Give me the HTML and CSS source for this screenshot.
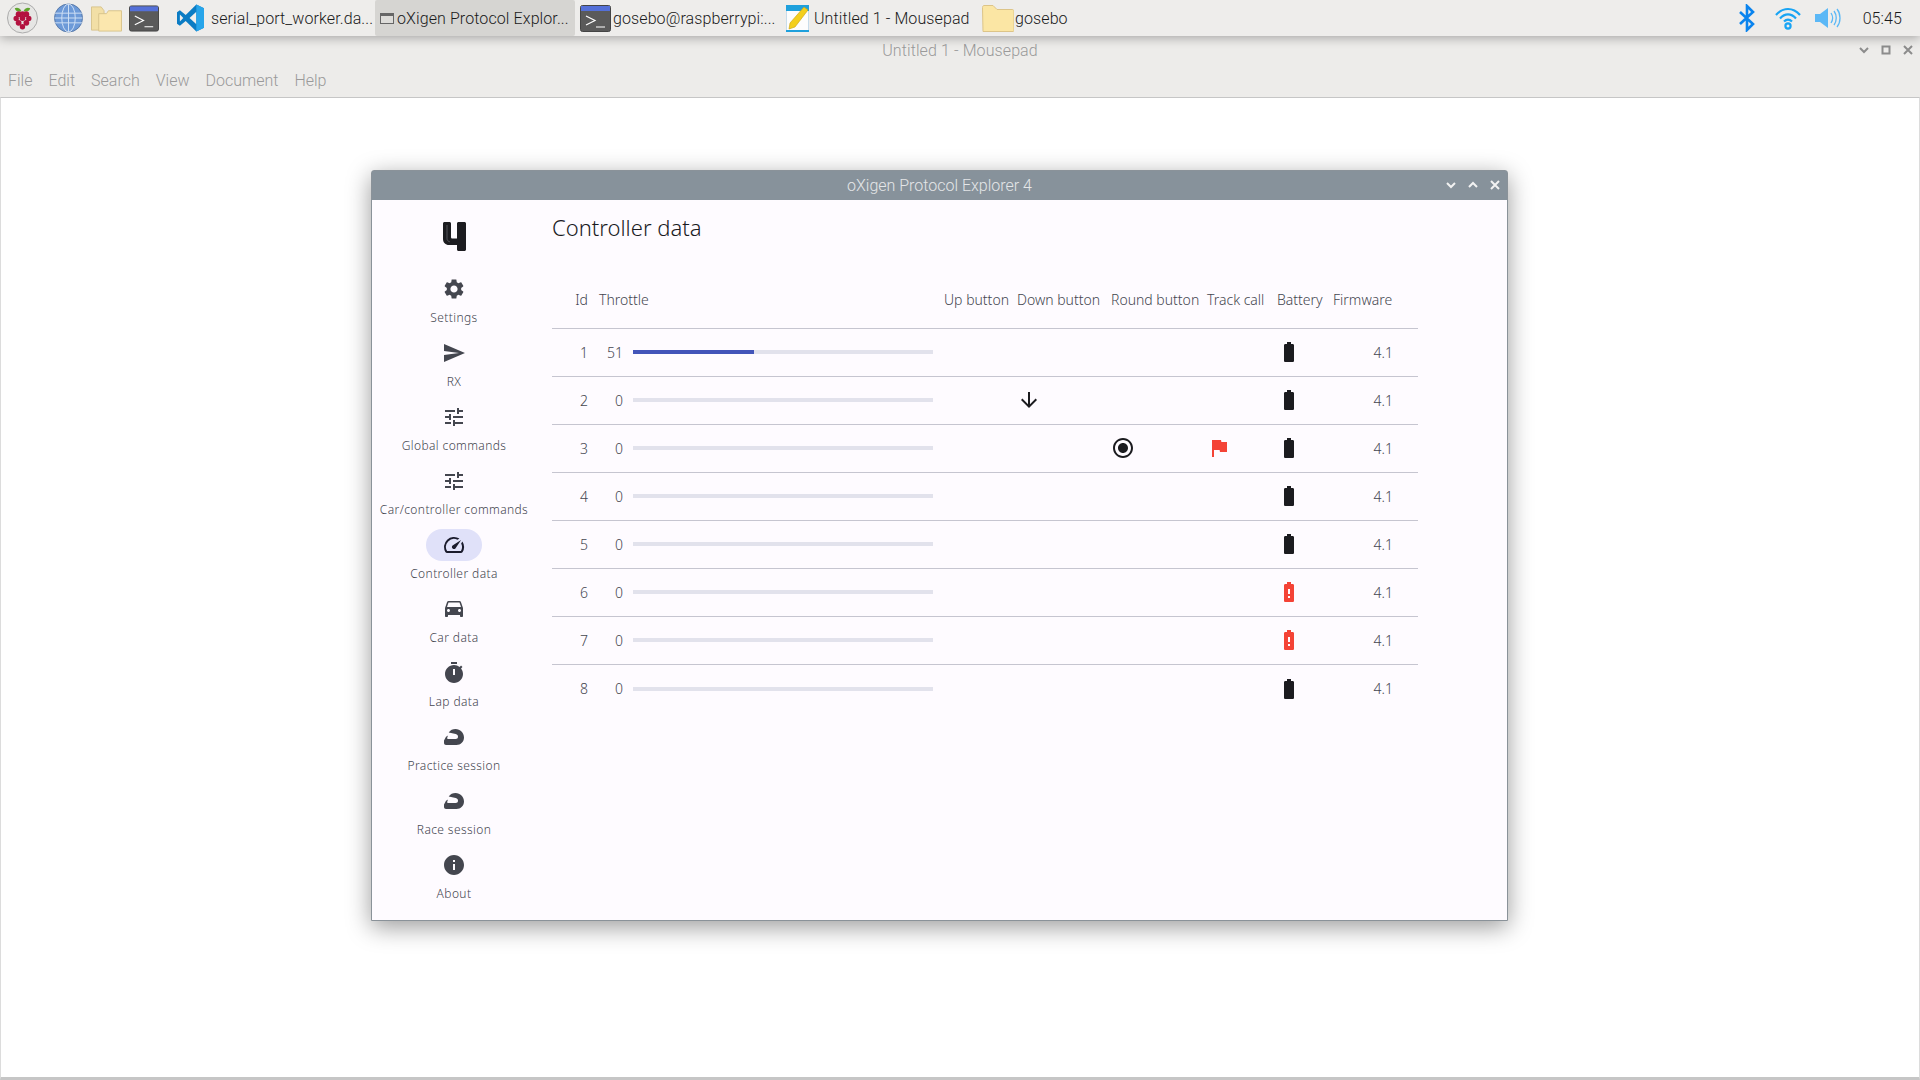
FILE: index.html
```html
<!DOCTYPE html>
<html lang="en">
<head>
  <meta charset="UTF-8" />
  <title>oXigen Protocol Explorer 4</title>
  <link rel="stylesheet" href="styles.css">
</head>
<body>
  <svg class="defs" width="0" height="0">
    <symbol id="ic-terminal" viewBox="0 0 31 27">
      <rect x="0.5" y="0.5" width="30" height="26" rx="2" fill="#5a5a5a" stroke="#444"/>
      <rect x="1" y="1" width="29" height="5" fill="#5470d8"/>
      <path d="M6 11l9 4.5-9 4.5M16 22h9" fill="none" stroke="#fff" stroke-width="1.2"/>
    </symbol>
    <symbol id="ic-folder" viewBox="0 0 32 27">
      <path d="M0.5 2.5c0-1 .6-2 1.5-2h9l4 4h15c1 0 2 .6 2 1.5v19.5c0 .5-.5 1-1 1h-30z" fill="#fbe6a4" stroke="#dcc488"/>
    </symbol>
    <symbol id="ic-tune" viewBox="0 0 24 24"><path d="M3 17v2h6v-2H3zM3 5v2h10V5H3zm10 16v-2h8v-2h-8v-2h-2v6h2zM7 9v2H3v2h4v2h2V9H7zm14 4v-2H11v2h10zm-6-4h2V7h4V5h-4V3h-2v6z"/></symbol>
    <symbol id="ic-helmet" viewBox="0 0 24 24"><path fill-rule="evenodd" d="M22 12.5C22 7.8 18.2 4 13.5 4 10.800 4 8.300 5.200 6.700 7.400l7 1.600c1.600.4 2.300 1.500 2.300 2.700 0 1.300-1 2.300-2.300 2.300H6.500c-1 0-1.500-.5-1.300-1.300l.8-2.200L4 11.800 2 15.500V18c0 1.100.9 2 2 2h10.500c4.200 0 7.500-3.300 7.500-7.500z"/></symbol>
    <symbol id="ic-battery" viewBox="0 0 24 24"><path d="M15.670 4H14V2h-4v2H8.330C7.600 4 7 4.600 7 5.330v15.330C7 21.400 7.600 22 8.330 22h7.330c.74 0 1.340-.6 1.340-1.330V5.330C17 4.600 16.400 4 15.670 4z"/></symbol>
    <symbol id="ic-battery-alert" viewBox="0 0 24 24"><path d="M15.670 4H14V2h-4v2H8.330C7.600 4 7 4.600 7 5.330v15.330C7 21.400 7.600 22 8.330 22h7.330c.74 0 1.340-.6 1.340-1.330V5.330C17 4.600 16.400 4 15.670 4zM13 18h-2v-2h2v2zm0-4h-2V9h2v5z"/></symbol>
  </svg>

  <div class="taskbar">
    <div class="launchers">
      <svg class="tb-raspi" viewBox="0 0 32 32" width="32" height="32">
        <circle cx="16" cy="16" r="15.500" fill="#e6e6e4" stroke="#a9a9a9"/>
        <path d="M15 9c-2-4-5-4-7-3 1 3 3 4 7 3zM17 9c2-4 5-4 7-3-1 3-3 4-7 3z" fill="#5fa52e"/>
        <g fill="#b3123f">
          <circle cx="12" cy="12" r="3"/><circle cx="20" cy="12" r="3"/><circle cx="16" cy="11.500" r="2.500"/>
          <circle cx="9.500" cy="16.500" r="2.800"/><circle cx="16" cy="16" r="3"/><circle cx="22.500" cy="16.500" r="2.800"/>
          <circle cx="12" cy="21" r="3"/><circle cx="20" cy="21" r="3"/><circle cx="16" cy="25" r="2.800"/>
        </g>
      </svg>
      <svg class="tb-globe" viewBox="0 0 30 30" width="30" height="30">
        <circle cx="15" cy="15" r="14.500" fill="#6d9ad8" stroke="#5a7aa8"/>
        <g fill="none" stroke="#cfe0f5" stroke-width="1">
          <ellipse cx="15" cy="15" rx="7" ry="14.500"/>
          <path d="M15 .5v29M1 10h28M1 20h28M.5 15h29"/>
        </g>
      </svg>
      <svg class="tb-folder-l" viewBox="0 0 32 27" width="32" height="27">
        <path d="M.5 1.500h10l3 4v20h-13z" fill="#f2dfa6" stroke="#d8c48c"/>
        <path d="M8 8.500h8l2-3h13.500v21H8z" fill="#fbe7ae" stroke="#d8c48c"/>
      </svg>
      <svg class="tb-term" width="31" height="27"><use href="#ic-terminal"/></svg>
      <svg class="tb-code" viewBox="0 0 28 28" width="28" height="28">
        <path d="M20 0l8 4v20l-8 4-11-11-6 5-3-2v-12l3-2 6 5z" fill="#0a7cc4"/>
        <path d="M20 7.500l-7 6.500 7 6.500z" fill="#f0efed"/>
        <path d="M3 10.500l3.500 3.500-3.500 3.500z" fill="#f0efed"/>
        <path d="M20 0l8 4v20l-8 4z" fill="#27a5ea"/>
      </svg>
    </div>
    <div class="task task-code">serial_port_worker.da...</div>
    <div class="task task-active">
      <span class="win-glyph"></span>
      <span>oXigen Protocol Explor...</span>
    </div>
    <div class="task task-term">
      <svg width="31" height="27"><use href="#ic-terminal"/></svg>
      <span>gosebo@raspberrypi:...</span>
    </div>
    <div class="task task-pad">
      <svg viewBox="0 0 23 27" width="23" height="27">
        <rect x="0.500" y="0.500" width="22" height="26" fill="#fdfdfd" stroke="#c8dcea"/>
        <rect x="0" y="0" width="23" height="6" fill="#1ea0dc"/>
        <rect x="0" y="25" width="23" height="2" fill="#1ea0dc"/>
        <path d="M18 2l4 3-13 17-6 2 1-6z" fill="#f3cf1c" stroke="#c9a10e" stroke-width=".6"/>
      </svg>
      <span>Untitled 1 - Mousepad</span>
    </div>
    <div class="task task-folder">
      <svg width="32" height="27"><use href="#ic-folder"/></svg>
      <span>gosebo</span>
    </div>
    <div class="tray">
      <svg viewBox="0 0 16 28" width="16" height="28" fill="none" stroke="#0a84ee" stroke-width="2.600">
        <path d="M1 8l13 12-6 6V2l6 6L1 20"/>
      </svg>
      <svg class="tray-wifi" viewBox="0 0 26 23" width="26" height="23" fill="none" stroke="#18a4f4" stroke-width="2.200">
        <path d="M1 8c7-8 17-8 24 0M5 11.500c5-5.500 11-5.500 16 0M9 14.500c2.500-2.500 5.500-2.500 8 0"/>
        <circle cx="13" cy="19" r="2.600"/>
      </svg>
      <svg class="tray-vol" viewBox="0 0 26 20" width="26" height="20">
        <path d="M0 6h5l8-6v20l-8-6H0z" fill="#5bb8f6"/>
        <path d="M16 5c2 3 2 7 0 10M19 3c3 4 3 10 0 14M22 1c4 5 4 13 0 18" fill="none" stroke="#5bb8f6" stroke-width="1.300"/>
      </svg>
      <span class="clock">05:45</span>
    </div>
  </div>

  <div class="pad-title">
    <span>Untitled 1 - Mousepad</span>
    <div class="pad-btns">
      <svg viewBox="0 0 10 10" width="10" height="10"><path d="M1 3l4 4 4-4" fill="none" stroke="#8c8c8c" stroke-width="2"/></svg>
      <svg viewBox="0 0 10 10" width="10" height="10"><rect x="1.500" y="1.500" width="7" height="7" fill="none" stroke="#8c8c8c" stroke-width="2"/></svg>
      <svg viewBox="0 0 10 10" width="10" height="10"><path d="M1 1l8 8M9 1l-8 8" fill="none" stroke="#8c8c8c" stroke-width="2"/></svg>
    </div>
  </div>
  <div class="pad-menu">
    <span>File</span><span>Edit</span><span>Search</span><span>View</span><span>Document</span><span>Help</span>
  </div>
  <div class="pad-editor"></div>

  <div class="window">
    <div class="win-title">
      <span>oXigen Protocol Explorer 4</span>
      <div class="win-btns">
        <svg viewBox="0 0 10 10" width="10" height="10"><path d="M1 3l4 4 4-4" fill="none" stroke="#f2f2f2" stroke-width="2"/></svg>
        <svg viewBox="0 0 10 10" width="10" height="10"><path d="M1 7l4-4 4 4" fill="none" stroke="#f2f2f2" stroke-width="2"/></svg>
        <svg viewBox="0 0 10 10" width="10" height="10"><path d="M1 1l8 8M9 1l-8 8" fill="none" stroke="#f2f2f2" stroke-width="2"/></svg>
      </div>
    </div>
    <div class="win-body">
      <nav class="rail">
        <svg class="logo" viewBox="0 0 23 29" width="23" height="29">
          <path d="M0 1.500C0 .7.700 0 1.500 0h5C7.300 0 8 .7 8 1.500V15c0 1 .5 1.500 1.500 1.500H14V1.500c0-.8.700-1.500 1.500-1.500h6c.8 0 1.500.7 1.500 1.500v26c0 .8-.7 1.500-1.500 1.500h-6c-.8 0-1.500-.7-1.500-1.500V23H6c-3.500 0-6-2.500-6-6z" fill="#1c1c20"/>
          <path d="M4 3v13.500c0 1.700 1 2.800 2.800 3.300" fill="none" stroke="#6c6c72" stroke-width=".7"/>
        </svg>
        <a class="rail-item">
          <span class="rail-icon"><svg viewBox="0 0 24 24"><path d="M19.140 12.940c.04-.3.06-.61.06-.94 0-.32-.02-.64-.07-.94l2.030-1.580c.18-.14.23-.41.12-.61l-1.920-3.320c-.12-.22-.37-.29-.59-.22l-2.390.96c-.5-.38-1.030-.7-1.620-.94l-.36-2.540c-.04-.24-.24-.41-.48-.41h-3.840c-.24 0-.43.17-.47.41l-.36 2.540c-.59.24-1.130.57-1.620.94l-2.390-.96c-.22-.08-.47 0-.59.22L2.740 8.870c-.12.21-.08.47.12.61l2.030 1.580c-.05.3-.09.63-.09.94s.02.64.07.94l-2.030 1.580c-.18.14-.23.41-.12.61l1.920 3.320c.12.22.37.29.59.22l2.390-.96c.5.38 1.030.7 1.620.94l.36 2.540c.05.24.24.41.48.41h3.840c.24 0 .44-.17.47-.41l.36-2.540c.59-.24 1.130-.56 1.620-.94l2.390.96c.22.08.47 0 .59-.22l1.920-3.320c.12-.22.07-.47-.12-.61l-2.010-1.580zM12 15.600c-1.980 0-3.600-1.620-3.600-3.600s1.620-3.600 3.600-3.600 3.600 1.620 3.600 3.600-1.620 3.600-3.600 3.600z"/></svg></span>
          <span class="rail-label">Settings</span>
        </a>
        <a class="rail-item">
          <span class="rail-icon"><svg viewBox="0 0 24 24"><path d="M2.010 21L23 12 2.010 3 2 10l15 2-15 2z"/></svg></span>
          <span class="rail-label">RX</span>
        </a>
        <a class="rail-item">
          <span class="rail-icon"><svg><use href="#ic-tune"/></svg></span>
          <span class="rail-label">Global commands</span>
        </a>
        <a class="rail-item">
          <span class="rail-icon"><svg><use href="#ic-tune"/></svg></span>
          <span class="rail-label">Car/controller commands</span>
        </a>
        <a class="rail-item selected">
          <span class="rail-icon"><svg viewBox="0 0 24 24"><path d="M20.380 8.570l-1.230 1.850a8 8 0 0 1-.22 7.580H5.070A8 8 0 0 1 15.580 6.850l1.850-1.230A10 10 0 0 0 3.350 19a2 2 0 0 0 1.720 1h13.850a2 2 0 0 0 1.740-1 10 10 0 0 0-.27-10.440zm-9.790 6.840a2 2 0 0 0 2.830 0l5.660-8.490-8.490 5.660a2 2 0 0 0 0 2.830z"/></svg></span>
          <span class="rail-label">Controller data</span>
        </a>
        <a class="rail-item">
          <span class="rail-icon"><svg viewBox="0 1 24 24"><path d="M18.920 6.010C18.720 5.420 18.160 5 17.500 5h-11c-.66 0-1.210.42-1.420 1.010L3 12v8c0 .55.45 1 1 1h1c.55 0 1-.45 1-1v-1h12v1c0 .55.45 1 1 1h1c.55 0 1-.45 1-1v-8l-2.080-5.990zM6.500 16c-.83 0-1.500-.67-1.500-1.500S5.670 13 6.500 13s1.500.67 1.500 1.500S7.330 16 6.500 16zm11 0c-.83 0-1.500-.67-1.500-1.500s.67-1.500 1.500-1.500 1.500.67 1.500 1.500-.67 1.500-1.500 1.500zM5 11l1.500-4.500h11L19 11H5z"/></svg></span>
          <span class="rail-label">Car data</span>
        </a>
        <a class="rail-item">
          <span class="rail-icon"><svg viewBox="0 0 24 24"><path fill-rule="evenodd" d="M15 1H9v2h6V1zm-4 13h2V8h-2v6zm8.030-6.610l1.420-1.420c-.43-.51-.9-.99-1.410-1.410l-1.420 1.420C16.070 4.740 14.120 4 12 4c-4.970 0-9 4.030-9 9s4.020 9 9 9 9-4.030 9-9c0-2.120-.74-4.070-1.970-5.610z"/></svg></span>
          <span class="rail-label">Lap data</span>
        </a>
        <a class="rail-item">
          <span class="rail-icon"><svg><use href="#ic-helmet"/></svg></span>
          <span class="rail-label">Practice session</span>
        </a>
        <a class="rail-item">
          <span class="rail-icon"><svg><use href="#ic-helmet"/></svg></span>
          <span class="rail-label">Race session</span>
        </a>
        <a class="rail-item">
          <span class="rail-icon"><svg viewBox="0 0 24 24"><path d="M12 2C6.480 2 2 6.480 2 12s4.480 10 10 10 10-4.480 10-10S17.520 2 12 2zm1 15h-2v-6h2v6zm0-8h-2V7h2v2z"/></svg></span>
          <span class="rail-label">About</span>
        </a>
      </nav>

      <main class="content">
        <h1>Controller data</h1>
        <div class="table">
          <div class="row head">
            <div>Id</div><div>Throttle</div><div>Up button</div><div>Down button</div><div>Round button</div><div>Track call</div><div>Battery</div><div>Firmware</div>
          </div>
          <div class="row">
            <div class="num">1</div>
            <div class="throttle"><span class="val">51</span><div class="bar"><div class="bar-fill" style="width: 40.2%"></div></div></div>
            <div></div><div></div><div></div><div></div>
            <div><svg class="ic"><use href="#ic-battery"/></svg></div>
            <div class="num">4.1</div>
          </div>
          <div class="row">
            <div class="num">2</div>
            <div class="throttle"><span class="val">0</span><div class="bar"></div></div>
            <div></div>
            <div><svg class="ic" viewBox="0 0 24 24"><path d="M20 12l-1.410-1.410L13 16.170V4h-2v12.170l-5.580-5.590L4 12l8 8 8-8z"/></svg></div>
            <div></div><div></div>
            <div><svg class="ic"><use href="#ic-battery"/></svg></div>
            <div class="num">4.1</div>
          </div>
          <div class="row">
            <div class="num">3</div>
            <div class="throttle"><span class="val">0</span><div class="bar"></div></div>
            <div></div><div></div>
            <div><svg class="ic" viewBox="0 0 24 24"><path d="M12 7c-2.760 0-5 2.240-5 5s2.240 5 5 5 5-2.240 5-5-2.240-5-5-5zm0-5C6.480 2 2 6.480 2 12s4.480 10 10 10 10-4.480 10-10S17.520 2 12 2zm0 18c-4.420 0-8-3.580-8-8s3.580-8 8-8 8 3.580 8 8-3.580 8-8 8z"/></svg></div>
            <div><svg class="ic alert" viewBox="0 0 24 24"><path d="M14.400 6L14 4H5v17h2v-7h5.600l.4 2h7V6z"/></svg></div>
            <div><svg class="ic"><use href="#ic-battery"/></svg></div>
            <div class="num">4.1</div>
          </div>
          <div class="row">
            <div class="num">4</div>
            <div class="throttle"><span class="val">0</span><div class="bar"></div></div>
            <div></div><div></div><div></div><div></div>
            <div><svg class="ic"><use href="#ic-battery"/></svg></div>
            <div class="num">4.1</div>
          </div>
          <div class="row">
            <div class="num">5</div>
            <div class="throttle"><span class="val">0</span><div class="bar"></div></div>
            <div></div><div></div><div></div><div></div>
            <div><svg class="ic"><use href="#ic-battery"/></svg></div>
            <div class="num">4.1</div>
          </div>
          <div class="row">
            <div class="num">6</div>
            <div class="throttle"><span class="val">0</span><div class="bar"></div></div>
            <div></div><div></div><div></div><div></div>
            <div><svg class="ic alert"><use href="#ic-battery-alert"/></svg></div>
            <div class="num">4.1</div>
          </div>
          <div class="row">
            <div class="num">7</div>
            <div class="throttle"><span class="val">0</span><div class="bar"></div></div>
            <div></div><div></div><div></div><div></div>
            <div><svg class="ic alert"><use href="#ic-battery-alert"/></svg></div>
            <div class="num">4.1</div>
          </div>
          <div class="row last">
            <div class="num">8</div>
            <div class="throttle"><span class="val">0</span><div class="bar"></div></div>
            <div></div><div></div><div></div><div></div>
            <div><svg class="ic"><use href="#ic-battery"/></svg></div>
            <div class="num">4.1</div>
          </div>
        </div>
      </main>
    </div>
  </div>
</body>
</html>
```

FILE: styles.css
```css
html, body {
  height: 100%;
}
body {
  margin: 0;
  background: #edecea;
  font-family: Roboto, "Liberation Sans", sans-serif;
  font-weight: 300;
  display: flex;
  flex-direction: column;
  overflow: hidden;
  position: relative;
}
.defs {
  position: absolute;
}

/* taskbar */
.taskbar {
  height: 36px;
  flex: none;
  background: #eeedeb;
  display: flex;
  align-items: center;
  font-size: 16px;
  letter-spacing: 0.1px;
  color: #1a1a1a;
  box-shadow: 0 2px 10px rgba(0, 0, 0, 0.3);
  position: relative;
  z-index: 1;
}
.launchers {
  display: flex;
  align-items: center;
  padding-left: 7px;
  width: 204px;
  flex: none;
  box-sizing: border-box;
}
.tb-globe { margin-left: 16px; }
.tb-folder-l { margin-left: 8px; }
.tb-term { margin-left: 7px; }
.tb-code { margin-left: 18px; }
.task {
  display: flex;
  align-items: center;
  height: 36px;
  flex: none;
  white-space: nowrap;
}
.task-code {
  width: 171px;
  margin-right: -7px;
  margin-left: 7px;
  box-sizing: border-box;
}
.task-active {
  background: #d6d5d2;
  border-radius: 2px;
  width: 200px;
  box-sizing: border-box;
  padding-left: 5px;
  gap: 3px;
}
.win-glyph {
  width: 14px;
  height: 11px;
  box-sizing: border-box;
  background: #dddcd9;
  border: 1px solid #666;
  border-top-width: 3px;
}
.task-term {
  margin-left: 5px;
  width: 206px;
  gap: 2px;
}
.task-pad {
  width: 196px;
  gap: 5px;
}
.task-folder {
  gap: 1px;
}
.tray {
  margin-left: auto;
  display: flex;
  align-items: center;
  padding-right: 18px;
}
.tray-wifi { margin-left: 20px; }
.tray-vol { margin-left: 14px; }
.clock {
  margin-left: 22px;
}

/* mousepad behind */
.pad-title {
  height: 28px;
  flex: none;
  display: flex;
  align-items: center;
  justify-content: center;
  font-size: 16px;
  letter-spacing: 0.1px;
  color: #9a9a9a;
  position: relative;
}
.pad-btns {
  position: absolute;
  right: 7px;
  top: 9px;
  display: flex;
  gap: 12px;
}
.pad-menu {
  height: 33px;
  flex: none;
  display: flex;
  align-items: center;
  box-sizing: border-box;
  padding-left: 8px;
  gap: 16px;
  font-size: 16px;
  color: #9a9a9a;
}
.pad-editor {
  flex: 1;
  background: #fff;
  border-top: 1px solid #c6c6c6;
  border-left: 1px solid #dcdcdc;
  border-right: 1px solid #dcdcdc;
  border-bottom: 3px solid #c6c6c6;
}

/* app window */
.window {
  position: absolute;
  left: 371px;
  top: 170px;
  width: 1137px;
  height: 751px;
  box-sizing: border-box;
  border: 1px solid #8a9299;
  border-radius: 3px 3px 0 0;
  background: #fefbff;
  box-shadow: 0 6px 24px rgba(0, 0, 0, 0.4);
  display: flex;
  flex-direction: column;
  z-index: 0;
}
.win-title {
  height: 29px;
  flex: none;
  background: #87929b;
  color: #e4e6e8;
  font-size: 16px;
  display: flex;
  align-items: center;
  justify-content: center;
  position: relative;
}
.win-btns {
  position: absolute;
  right: 7px;
  top: 9px;
  display: flex;
  gap: 12px;
}
.win-body {
  flex: 1;
  display: flex;
  font-family: "Noto Sans", sans-serif;
  font-weight: 300;
}

/* rail */
.rail {
  width: 164px;
  flex: none;
  display: flex;
  flex-direction: column;
  align-items: center;
}
.logo {
  margin-top: 22px;
  margin-bottom: 22px;
  display: block;
}
.rail-item {
  height: 64px;
  display: flex;
  flex-direction: column;
  align-items: center;
}
.rail-icon {
  width: 56px;
  height: 32px;
  flex: none;
  border-radius: 16px;
  display: flex;
  align-items: center;
  justify-content: center;
  margin-bottom: 5px;
}
.rail-icon svg {
  width: 24px;
  height: 24px;
  fill: #44464f;
}
.rail-label {
  font-size: 12px;
  line-height: 16px;
  letter-spacing: 0.4px;
  color: #44464f;
  white-space: nowrap;
}
.selected .rail-icon {
  background: #e0e1f9;
}
.selected .rail-icon svg {
  fill: #1a1b2c;
}

/* table */
.content {
  flex: 1;
  padding-left: 16px;
}
h1 {
  margin: 13px 0 31px;
  font-size: 22px;
  line-height: 28px;
  font-weight: 300;
  color: #1b1b1f;
}
.table {
  width: 866px;
}
.row {
  display: grid;
  grid-template-columns: 12px 334px 62px 83px 85px 59px 45px 60px;
  column-gap: 11px;
  align-items: center;
  height: 48px;
  box-sizing: border-box;
  padding: 0 24px 1px;
  border-bottom: 1px solid #c6c5d0;
  font-size: 14px;
  color: #44464f;
}
.row.head {
  height: 57px;
  white-space: nowrap;
}
.row.head div:first-child {
  justify-self: end;
}
.row.last {
  border-bottom: none;
}
.num {
  text-align: right;
}
.throttle {
  display: flex;
  align-items: center;
}
.val {
  width: 24px;
  text-align: right;
  margin-right: 10px;
  flex: none;
}
.bar {
  flex: 1;
  height: 4px;
  background: #e2e2ec;
}
.bar-fill {
  height: 4px;
  background: #4355b9;
}
.ic {
  display: block;
  width: 24px;
  height: 24px;
  fill: #1b1b1f;
}
.ic.alert {
  fill: #f44336;
}
```
